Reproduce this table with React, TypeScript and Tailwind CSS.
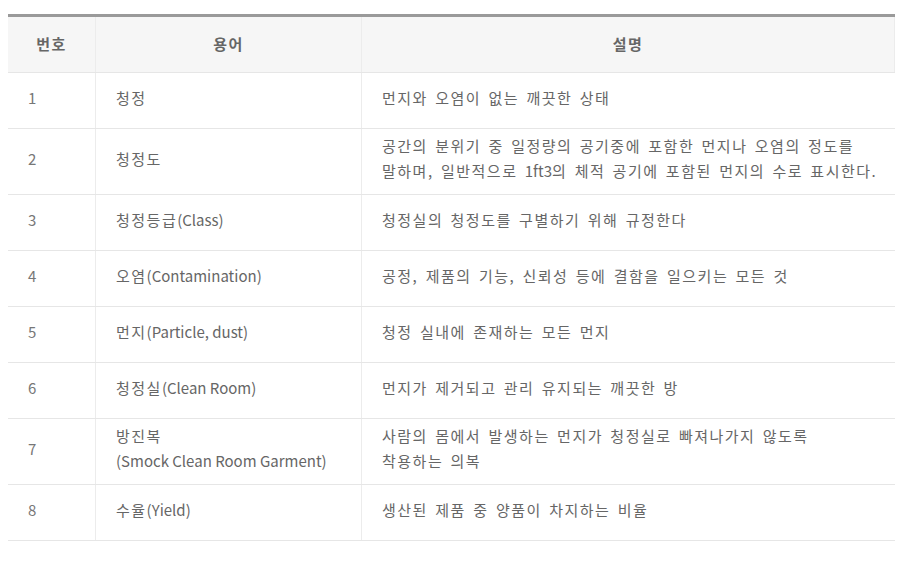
import React from "react";

type Row = { n: string; term: string[]; desc: string[] };

const rows: Row[] = [
  { n: "1", term: ["청정"], desc: ["먼지와 오염이 없는 깨끗한 상태"] },
  {
    n: "2",
    term: ["청정도"],
    desc: [
      "공간의 분위기 중 일정량의 공기중에 포함한 먼지나 오염의 정도를",
      "말하며, 일반적으로 1ft3의 체적 공기에 포함된 먼지의 수로 표시한다.",
    ],
  },
  { n: "3", term: ["청정등급(Class)"], desc: ["청정실의 청정도를 구별하기 위해 규정한다"] },
  { n: "4", term: ["오염(Contamination)"], desc: ["공정, 제품의 기능, 신뢰성 등에 결함을 일으키는 모든 것"] },
  { n: "5", term: ["먼지(Particle, dust)"], desc: ["청정 실내에 존재하는 모든 먼지"] },
  { n: "6", term: ["청정실(Clean Room)"], desc: ["먼지가 제거되고 관리 유지되는 깨끗한 방"] },
  {
    n: "7",
    term: ["방진복", "(Smock Clean Room Garment)"],
    desc: ["사람의 몸에서 발생하는 먼지가 청정실로 빠져나가지 않도록", "착용하는 의복"],
  },
  { n: "8", term: ["수율(Yield)"], desc: ["생산된 제품 중 양품이 차지하는 비율"] },
];

function Ko({ text }: { text: string }) {
  const parts = text.split(/([\uAC00-\uD7A3][\uAC00-\uD7A3 ,.]*)/).filter((p) => p.length > 0);
  return (
    <>
      {parts.map((p, i) =>
        /^[\uAC00-\uD7A3]/.test(p) ? (
          <span key={i} className="tracking-[1.5px] [word-spacing:2.5px]">
            {p}
          </span>
        ) : (
          <span key={i}>{p}</span>
        )
      )}
    </>
  );
}

function Lines({ lines }: { lines: string[] }) {
  return (
    <div>
      {lines.map((l, i) => (
        <div key={i}>
          <Ko text={l} />
        </div>
      ))}
    </div>
  );
}

export default function App() {
  return (
    <div
      className="w-[915px] h-[578px] bg-white pt-[14px] pl-[8px]"
      style={{ fontFamily: '"Noto Sans CJK KR", "Noto Sans", sans-serif' }}
    >
      <div className="w-[887px] border-t-[3px] border-[#9a9a9a]">
        <div className="flex h-[56px] bg-[#f6f6f6] border-b border-[#e6e6e6] text-[15px] font-bold text-[#666] tracking-[1.5px]">
          <div className="w-[88px] flex items-center justify-center border-r border-[#ececec]">번호</div>
          <div className="w-[266px] flex items-center justify-center border-r border-[#ececec]">용어</div>
          <div className="flex-1 flex items-center justify-center border-r border-[#ececec]">설명</div>
        </div>
        {rows.map((r) => (
          <div key={r.n} className="flex border-b border-[#e6e6e6] text-[15px] leading-[25px] text-[#666] whitespace-nowrap">
            <div className="w-[88px] min-h-[55px] flex items-center pl-[20px] pt-[4px] pb-[11px] border-r border-[#ececec] text-[#777]">
              {r.n}
            </div>
            <div className="w-[266px] min-h-[55px] flex items-center pl-[20px] pt-[4px] pb-[11px] border-r border-[#ececec]">
              <Lines lines={r.term} />
            </div>
            <div className="flex-1 min-h-[55px] flex items-center pl-[20px] pt-[4px] pb-[11px]">
              <Lines lines={r.desc} />
            </div>
          </div>
        ))}
      </div>
    </div>
  );
}
